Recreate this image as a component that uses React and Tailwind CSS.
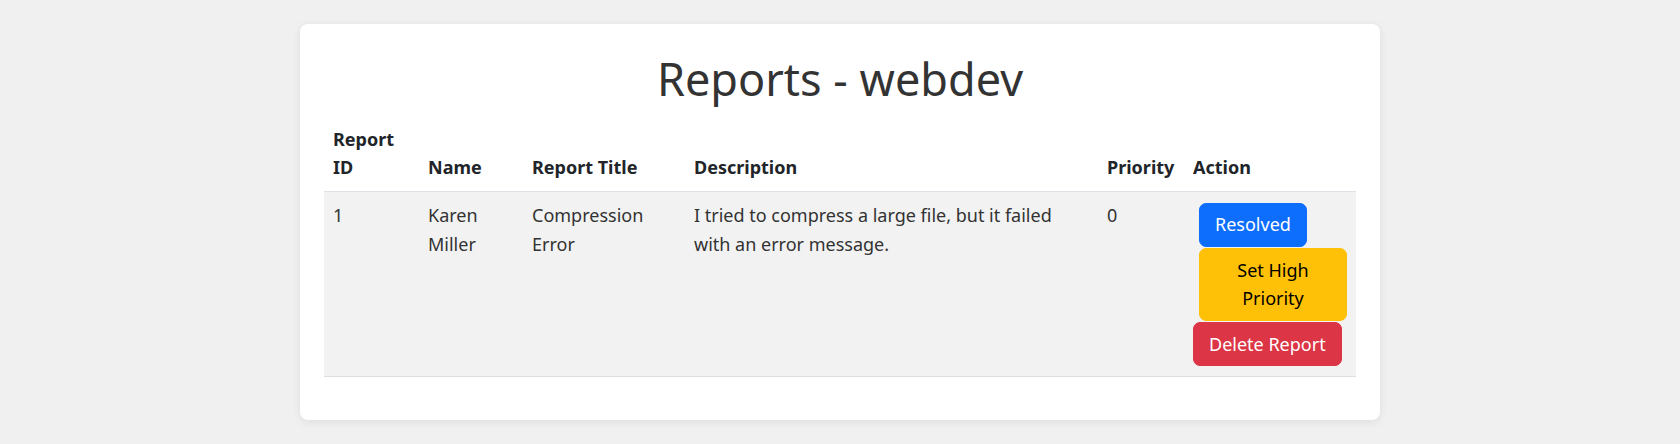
import React from 'react';

const reports = [
  {
    id: 1,
    name: 'Karen Miller',
    title: 'Compression Error',
    description: 'I tried to compress a large file, but it failed with an error message.',
    priority: 0,
  },
];

export default function App() {
  return (
    <div
      className="min-h-screen bg-[#f0f0f0] flex justify-center"
      style={{ fontFamily: '"Noto Sans", "Open Sans", sans-serif' }}
    >
      <div className="w-[1080px] mt-6 mb-6 bg-white rounded-lg shadow-[0_2px_10px_rgba(0,0,0,0.08)] px-6 pt-[28px] pb-[43px] self-start">
        {/* 标题 */}
        <h1 className="text-center text-[45px] leading-[1.2] font-normal text-[#333] mb-[9.5px]">
          Reports - webdev
        </h1>

        {/* 报告表格 */}
        <table className="w-[1032px] table-fixed border-collapse text-[18px] leading-[1.6]">
          <colgroup>
            <col className="w-[95px]" />
            <col className="w-[104px]" />
            <col className="w-[162px]" />
            <col className="w-[413px]" />
            <col className="w-[86px]" />
            <col className="w-[172px]" />
          </colgroup>
          <thead>
            <tr className="border-b border-[#dee2e6] text-[#212529]">
              <th className="p-[9px] text-left align-bottom font-bold">Report ID</th>
              <th className="p-[9px] text-left align-bottom font-bold">Name</th>
              <th className="p-[9px] text-left align-bottom font-bold">Report Title</th>
              <th className="p-[9px] text-left align-bottom font-bold">Description</th>
              <th className="p-[9px] text-left align-bottom font-bold">Priority</th>
              <th className="p-[9px] text-left align-bottom font-bold">Action</th>
            </tr>
          </thead>
          <tbody>
            {reports.map(report => (
              <tr key={report.id} className="bg-[#f2f2f2] border-b border-[#dedede] text-[#333]">
                <td className="p-[9px] align-top">{report.id}</td>
                <td className="p-[9px] align-top">{report.name}</td>
                <td className="p-[9px] align-top">{report.title}</td>
                <td className="p-[9px] align-top">{report.description}</td>
                <td className="p-[9px] align-top">{report.priority}</td>
                <td className="px-[9px] pt-[9px] pb-[10px] align-top">
                  <div className="flex flex-col items-start gap-[1px]">
                    <button className="ml-[6px] mt-[1.5px] px-[15px] py-[6.75px] border border-[#0d6efd] bg-[#0d6efd] text-white rounded-[7px] text-center">
                      Resolved
                    </button>
                    <button className="ml-[6px] px-[15px] py-[6.75px] border border-[#ffc107] bg-[#ffc107] text-black rounded-[7px] text-center">
                      Set High Priority
                    </button>
                    <button className="px-[15px] py-[6.75px] border border-[#dc3545] bg-[#dc3545] text-white rounded-[7px] text-center">
                      Delete Report
                    </button>
                  </div>
                </td>
              </tr>
            ))}
          </tbody>
        </table>
      </div>
    </div>
  );
}
